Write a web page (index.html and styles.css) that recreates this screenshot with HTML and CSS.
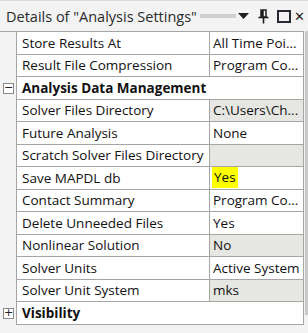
FILE: index.html
```html
<!DOCTYPE html>
<html lang="en">
<head>
  <meta charset="UTF-8" />
  <title>Details of "Analysis Settings"</title>
  <link rel="stylesheet" href="styles.css">
</head>
<body>
  <div class="pane">
    <div class="titlebar">
      <span class="title">Details of "Analysis Settings"</span>
      <span class="grip"></span>
      <svg class="tb-icon" width="12" height="6" viewBox="0 0 12 6"><path d="M0 0h11L5.5 6z" fill="#1e1e1e"/></svg>
      <svg class="tb-icon pin" width="11" height="15" viewBox="0 0 11 15"><path d="M3 1h5v7H3z M3 1h2v7H3z" fill="none" stroke="#1e1e1e" stroke-width="1.5"/><path d="M3 1.5h2v6H3z" fill="#1e1e1e"/><path d="M0.5 8.5h10" stroke="#1e1e1e" stroke-width="1.6"/><path d="M5.5 9v5.5" stroke="#1e1e1e" stroke-width="1.6"/></svg>
      <svg class="tb-icon box" width="14" height="13" viewBox="0 0 14 13"><rect x="1" y="1" width="12" height="11" fill="none" stroke="#262a33" stroke-width="2"/></svg>
      <span class="close">✕</span>
    </div>

    <div class="content">
      <div class="grid">
        <div class="row"><span class="gutter"></span><span class="name">Store Results At</span><span class="value">All Time Poi...</span></div>
        <div class="row"><span class="gutter"></span><span class="name">Result File Compression</span><span class="value">Program Co...</span></div>
        <div class="row group"><span class="gutter"><span class="toggle">−</span></span><span class="name">Analysis Data Management</span></div>
        <div class="row"><span class="gutter"></span><span class="name">Solver Files Directory</span><span class="value ro">C:\Users\Ch...</span></div>
        <div class="row"><span class="gutter"></span><span class="name">Future Analysis</span><span class="value">None</span></div>
        <div class="row"><span class="gutter"></span><span class="name">Scratch Solver Files Directory</span><span class="value ro"></span></div>
        <div class="row"><span class="gutter"></span><span class="name">Save MAPDL db</span><span class="value"><mark class="hl">Yes</mark></span></div>
        <div class="row"><span class="gutter"></span><span class="name">Contact Summary</span><span class="value">Program Co...</span></div>
        <div class="row"><span class="gutter"></span><span class="name">Delete Unneeded Files</span><span class="value">Yes</span></div>
        <div class="row"><span class="gutter"></span><span class="name">Nonlinear Solution</span><span class="value ro">No</span></div>
        <div class="row"><span class="gutter"></span><span class="name">Solver Units</span><span class="value">Active System</span></div>
        <div class="row"><span class="gutter"></span><span class="name">Solver Unit System</span><span class="value ro">mks</span></div>
        <div class="row group"><span class="gutter"><span class="toggle">+</span></span><span class="name">Visibility</span></div>
      </div>
      <div class="scroll"></div>
    </div>
  </div>
</body>
</html>
```

FILE: styles.css
```css
* { box-sizing: border-box; margin: 0; padding: 0; }
body {
  background: #f3f3f3;
  font-family: 'Open Sans', 'Noto Sans', sans-serif;
  color: #111;
  width: 308px;
  height: 333px;
  overflow: hidden;
}
.pane {
  display: flex;
  flex-direction: column;
  height: 100%;
  border-top: 1px solid #dadada;
}
.titlebar {
  display: flex;
  align-items: center;
  height: 30px;
  padding-left: 6px;
  white-space: nowrap;
}
.title {
  font-size: 14.5px;
  color: #2a2a2a;
}
.grip {
  flex: none;
  width: 36px;
  height: 4px;
  margin-left: 3px;
  background-image: radial-gradient(circle, #c4c4c4 0.6px, transparent 1px);
  background-size: 2px 2px;
}
.tb-icon { display: block; flex: none; margin-left: 2px; }
.pin { margin-left: 8px; }
.box { margin-left: 8px; }
.close {
  margin-left: 3px;
  font-size: 13px;
  font-family: 'DejaVu Sans', sans-serif;
  color: #1e1e1e;
}
.content {
  display: flex;
  align-items: flex-start;
}
.grid {
  display: flex;
  flex-direction: column;
  width: 304px;
  border-top: 1px solid #a5a5a5;
}
.row {
  display: flex;
  height: 22.5px;
  font-size: 13.5px;
}
.gutter {
  flex: none;
  width: 16px;
  display: flex;
  align-items: center;
  padding-left: 3px;
}
.name, .value {
  display: flex;
  align-items: center;
  border-left: 1px solid #a5a5a5;
  border-bottom: 1px solid #a5a5a5;
  background: #fff;
  white-space: nowrap;
  overflow: hidden;
}
.name {
  width: 193px;
  padding-left: 5px;
}
.value {
  width: 95px;
  padding-left: 3px;
  border-right: 1px solid #a5a5a5;
}
.value.ro { background: #e6e6e3; }
.group .name {
  width: 288px;
  font-weight: bold;
  border-right: 1px solid #a5a5a5;
}
.toggle {
  width: 11px;
  height: 11px;
  border: 1px solid #8a8a8a;
  background: #fff;
  font-size: 11px;
  line-height: 8px;
  text-align: center;
  font-family: 'DejaVu Sans', sans-serif;
  color: #222;
}
.hl {
  background: #ffff00;
  color: #111;
  padding: 1px 2px 2px 2px;
  margin-left: -1px;
}
.scroll {
  width: 3px;
  height: 284px;
  margin-left: 1px;
  background: #c9c9c9;
}
```
